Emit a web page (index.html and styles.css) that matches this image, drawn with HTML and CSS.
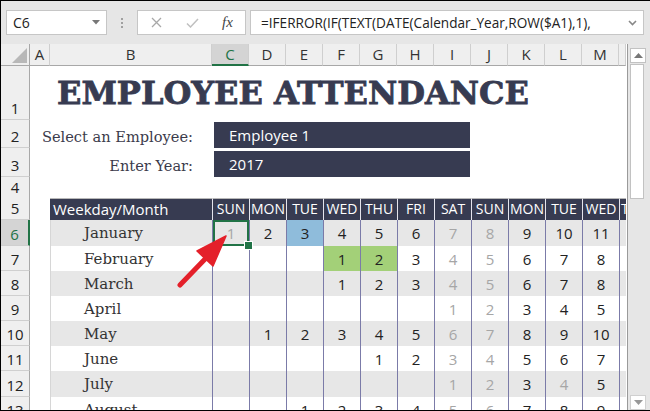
FILE: index.html
```html
<!DOCTYPE html>
<html>
<head>
<meta charset="utf-8">
<link rel="stylesheet" href="styles.css">
</head>
<body>
<div class="app">
  <div class="topbar">
    <div class="namebox">
      <span>C6</span>
      <svg class="caret" width="8" height="5" viewBox="0 0 8 5"><path d="M0 0H8L4 4.5Z" fill="#777"/></svg>
    </div>
    <div class="grip"><i></i><i></i><i></i></div>
    <div class="fxbox">
      <svg class="ico-x" width="11" height="11" viewBox="0 0 11 11"><path d="M1 1L10 10M10 1L1 10" stroke="#a8a8a8" stroke-width="1.3"/></svg>
      <svg class="ico-ok" width="13" height="10" viewBox="0 0 13 10"><path d="M1 5.5L4.5 9L12 1" stroke="#c0c0c0" stroke-width="1.5" fill="none"/></svg>
      <span class="fx">fx</span>
    </div>
    <div class="formula">
      <span>=IFERROR(IF(TEXT(DATE(Calendar_Year,ROW($A1),1),</span>
      <svg class="chev" width="9" height="6" viewBox="0 0 9 6"><path d="M1 1L4.5 4.5L8 1" stroke="#888" stroke-width="1.6" fill="none"/></svg>
    </div>
  </div>
  <div class="main">
    <div class="sheet">
      <div class="row colhdr">
        <div class="c corner"><svg width="15" height="15" viewBox="0 0 15 15"><path d="M15 0V15H0Z" fill="#b8b8b8"/></svg></div>
        <div class="c">A</div><div class="c">B</div><div class="c on">C</div><div class="c">D</div><div class="c">E</div><div class="c">F</div><div class="c">G</div><div class="c">H</div><div class="c">I</div><div class="c">J</div><div class="c">K</div><div class="c">L</div><div class="c">M</div><div class="c"></div>
      </div>
      <div class="row r1">
        <div class="rh">1</div>
        <div class="title">EMPLOYEE ATTENDANCE</div>
      </div>
      <div class="row r2">
        <div class="rh">2</div>
        <div class="lbl">Select an Employee:</div>
        <div class="inbox">Employee 1</div>
      </div>
      <div class="row r3">
        <div class="rh">3</div>
        <div class="lbl">Enter Year:</div>
        <div class="inbox in2">2017</div>
      </div>
      <div class="row r4"><div class="rh">4</div></div>
      <div class="row r5">
        <div class="rh">5</div><div></div>
        <div class="th first">Weekday/Month</div>
        <div class="th">SUN</div><div class="th">MON</div><div class="th">TUE</div><div class="th">WED</div><div class="th">THU</div><div class="th">FRI</div><div class="th">SAT</div><div class="th">SUN</div><div class="th">MON</div><div class="th">TUE</div><div class="th">WED</div><div class="th cut">THU</div>
      </div>
      <div class="row r6 g">
        <div class="rh on">6</div><div></div>
        <div class="m">January</div>
        <div class="n w sel">1</div><div class="n">2</div><div class="n blue">3</div><div class="n">4</div><div class="n">5</div><div class="n">6</div><div class="n w">7</div><div class="n w">8</div><div class="n">9</div><div class="n">10</div><div class="n">11</div><div class="n"></div>
      </div>
      <div class="row r7">
        <div class="rh">7</div><div></div>
        <div class="m">February</div>
        <div class="n"></div><div class="n"></div><div class="n"></div><div class="n green">1</div><div class="n green">2</div><div class="n">3</div><div class="n w">4</div><div class="n w">5</div><div class="n">6</div><div class="n">7</div><div class="n">8</div><div class="n"></div>
      </div>
      <div class="row r8 g">
        <div class="rh">8</div><div></div>
        <div class="m">March</div>
        <div class="n"></div><div class="n"></div><div class="n"></div><div class="n">1</div><div class="n">2</div><div class="n">3</div><div class="n w">4</div><div class="n w">5</div><div class="n">6</div><div class="n">7</div><div class="n">8</div><div class="n"></div>
      </div>
      <div class="row r9">
        <div class="rh">9</div><div></div>
        <div class="m">April</div>
        <div class="n"></div><div class="n"></div><div class="n"></div><div class="n"></div><div class="n"></div><div class="n"></div><div class="n w">1</div><div class="n w">2</div><div class="n">3</div><div class="n">4</div><div class="n">5</div><div class="n"></div>
      </div>
      <div class="row r10 g">
        <div class="rh">10</div><div></div>
        <div class="m">May</div>
        <div class="n"></div><div class="n">1</div><div class="n">2</div><div class="n">3</div><div class="n">4</div><div class="n">5</div><div class="n w">6</div><div class="n w">7</div><div class="n">8</div><div class="n">9</div><div class="n">10</div><div class="n"></div>
      </div>
      <div class="row r11">
        <div class="rh">11</div><div></div>
        <div class="m">June</div>
        <div class="n"></div><div class="n"></div><div class="n"></div><div class="n"></div><div class="n">1</div><div class="n">2</div><div class="n w">3</div><div class="n w">4</div><div class="n">5</div><div class="n">6</div><div class="n">7</div><div class="n"></div>
      </div>
      <div class="row r12 g">
        <div class="rh">12</div><div></div>
        <div class="m">July</div>
        <div class="n"></div><div class="n"></div><div class="n"></div><div class="n"></div><div class="n"></div><div class="n"></div><div class="n w">1</div><div class="n w">2</div><div class="n">3</div><div class="n w">4</div><div class="n">5</div><div class="n"></div>
      </div>
      <div class="row r13">
        <div class="rh">13</div><div></div>
        <div class="m">August</div>
        <div class="n"></div><div class="n"></div><div class="n">1</div><div class="n">2</div><div class="n">3</div><div class="n">4</div><div class="n w">5</div><div class="n w">6</div><div class="n">7</div><div class="n">8</div><div class="n">9</div><div class="n"></div>
      </div>
      <svg class="arrow" width="627" height="365" viewBox="0 0 627 365">
        <line x1="179" y1="241" x2="206" y2="213" stroke="#e4202a" stroke-width="5" stroke-linecap="round"/>
        <path d="M225 192L196 207L212 222Z" fill="#e4202a" stroke="#e4202a" stroke-width="1.5" stroke-linejoin="round"/>
      </svg>
    </div>
    <div class="vscroll">
      <div class="sbtn"><svg width="9" height="5" viewBox="0 0 9 5"><path d="M0 5H9L4.5 0Z" fill="#777"/></svg></div>
      <div class="thumb"></div>
      <div class="track"></div>
      <div class="sbtn"><svg width="9" height="5" viewBox="0 0 9 5"><path d="M0 0H9L4.5 5Z" fill="#999"/></svg></div>
    </div>
  </div>
</div>
</body>
</html>
```
FILE: styles.css
```css
* { box-sizing: border-box; }
body { margin: 0; }

.app {
  width: 650px;
  height: 411px;
  border: 1px solid #000;
  border-right: none;
  display: flex;
  flex-direction: column;
  overflow: hidden;
  background: #e6e6e6;
  font-family: "Open Sans", "Noto Sans", sans-serif;
  color: #222;
}

/* formula bar */
.topbar {
  height: 43px;
  flex: none;
  display: flex;
  align-items: flex-start;
  padding: 9px 0 0 5px;
  background: #e6e6e6;
}
.namebox {
  width: 101px;
  height: 25px;
  background: #fff;
  border: 1px solid #c6c6c6;
  display: flex;
  align-items: center;
  justify-content: space-between;
  padding: 0 6px 0 6px;
  font-size: 14px;
  color: #222;
}
.grip {
  margin-left: 14px;
  width: 3px;
  height: 25px;
  display: flex;
  flex-direction: column;
  justify-content: center;
  gap: 2px;
}
.grip i { display: block; width: 2px; height: 2px; background: #a0a0a0; }
.fxbox {
  margin-left: 13px;
  width: 109px;
  height: 25px;
  background: #fff;
  border: 1px solid #c6c6c6;
  display: flex;
  align-items: center;
  padding-left: 13px;
}
.ico-x { margin-right: 24px; }
.ico-ok { margin-right: 23px; }
.fx {
  font-family: "Liberation Serif", "DejaVu Serif", serif;
  font-style: italic;
  font-size: 15px;
  color: #444;
}
.formula {
  margin-left: 4px;
  width: 394px;
  height: 25px;
  background: #fff;
  border: 1px solid #c6c6c6;
  display: flex;
  align-items: center;
  justify-content: space-between;
  padding: 0 6px 0 10px;
  font-size: 13.6px;
  color: #222;
  white-space: nowrap;
}

/* sheet */
.main { flex: 1; display: flex; min-height: 0; }
.sheet {
  width: 627px;
  flex: none;
  background: #fff;
  position: relative;
  border-right: 1px solid #9a9a9a;
  overflow: hidden;
}
.row {
  display: grid;
  grid-template-columns: 29px 20px 162px repeat(11, 37px) 7px;
}
.colhdr { height: 22px; }
.c {
  background: #efefef;
  border-right: 1px solid #cfcfcf;
  border-bottom: 1px solid #a8a8a8;
  text-align: center;
  font-size: 15px;
  line-height: 20px;
  color: #333;
}
.c.on { background: #d4d4d4; color: #217346; border-bottom: 2px solid #217346; }
.corner { display: flex; align-items: flex-end; justify-content: flex-end; padding: 0 2px 2px 0; border-right-color: #a8a8a8; }

.rh {
  background: #efefef;
  border-right: 1px solid #a8a8a8;
  border-bottom: 1px solid #cfcfcf;
  display: flex;
  align-items: flex-end;
  justify-content: center;
  font-size: 15px;
  line-height: 20px;
  padding-bottom: 1px;
  color: #222;
}
.rh.on { background: #d4d4d4; color: #217346; border-right: 2px solid #217346; }

.r1 { height: 54px; }
.r2 { height: 28px; }
.r3 { height: 29px; }
.r4 { height: 21px; }
.r5 { height: 22px; }
.r6 { height: 26px; }
.r7, .r8, .r9, .r10, .r11 { height: 25px; }
.r12 { height: 26px; }
.r13 { height: 25px; }

.title {
  grid-column: 2 / -1;
  padding: 9px 0 0 27px;
  font-family: "DejaVu Serif", serif;
  font-weight: bold;
  font-size: 32px;
  line-height: 36px;
  color: #373b51;
  -webkit-text-stroke: 0.8px #373b51;
  white-space: nowrap;
}
.lbl {
  grid-column: 2 / 4;
  text-align: right;
  padding: 0 19px 3px 0;
  align-self: end;
  font-family: "DejaVu Serif", serif;
  font-size: 14.6px;
  color: #3b3b4b;
  white-space: nowrap;
}
.inbox {
  grid-column: 4 / 11;
  margin: 2px 1px 0 2px;
  background: #373b51;
  color: #fff;
  font-size: 15px;
  padding-left: 15px;
  display: flex;
  align-items: center;
}
.inbox.in2 { margin-top: 3px; }

.th {
  background: #373b51;
  color: #fff;
  border-top: 1px solid #b8b8b8;
  border-left: 1px solid #e4e4ec;
  font-size: 14px;
  line-height: 20px;
  text-align: center;
  white-space: nowrap;
  overflow: hidden;
}
.th.first { text-align: left; padding-left: 3px; border-left: none; font-size: 15px; }
.th.cut { text-align: left; padding-left: 1px; }

.m {
  grid-column: 3;
  border-left: 1px solid #d6d6d6;
  padding-left: 33px;
  font-family: "DejaVu Serif", serif;
  font-size: 15px;
  color: #333;
  display: flex;
  align-items: center;
}
.n {
  border-left: 1px solid #7b7ba8;
  text-align: center;
  font-size: 15px;
  display: flex;
  align-items: center;
  justify-content: center;
  color: #222;
  position: relative;
}
.g .m, .g .n { background: #e7e7e7; }
.n.w { color: #a6a6a6; }
.g .n.blue { background: #8fbcdb; }
.n.green { background: #a3d078; }
.n.sel { box-shadow: inset 0 0 0 2px #217346; }
.n.sel::after {
  content: "";
  position: absolute;
  right: -4px;
  bottom: -4px;
  width: 7px;
  height: 7px;
  background: #217346;
  border: 1px solid #fff;
  z-index: 2;
}

.arrow { position: absolute; left: 0; top: 0; pointer-events: none; z-index: 3; }

/* scrollbar */
.vscroll {
  flex: 1;
  background: #e6e6e6;
  display: flex;
  flex-direction: column;
  padding: 4px 4px 0 2px;
}
.sbtn {
  height: 15px;
  background: #fff;
  border: 1px solid #c2c2c2;
  display: flex;
  align-items: center;
  justify-content: center;
  flex: none;
}
.thumb { height: 135px; margin: 1px 2px 0 0; background: #fff; border: 1px solid #c2c2c2; flex: none; }
.track { flex: 1; }
.vscroll .sbtn:last-child { margin-bottom: 0; border-color: #d0d0d0; }
```
